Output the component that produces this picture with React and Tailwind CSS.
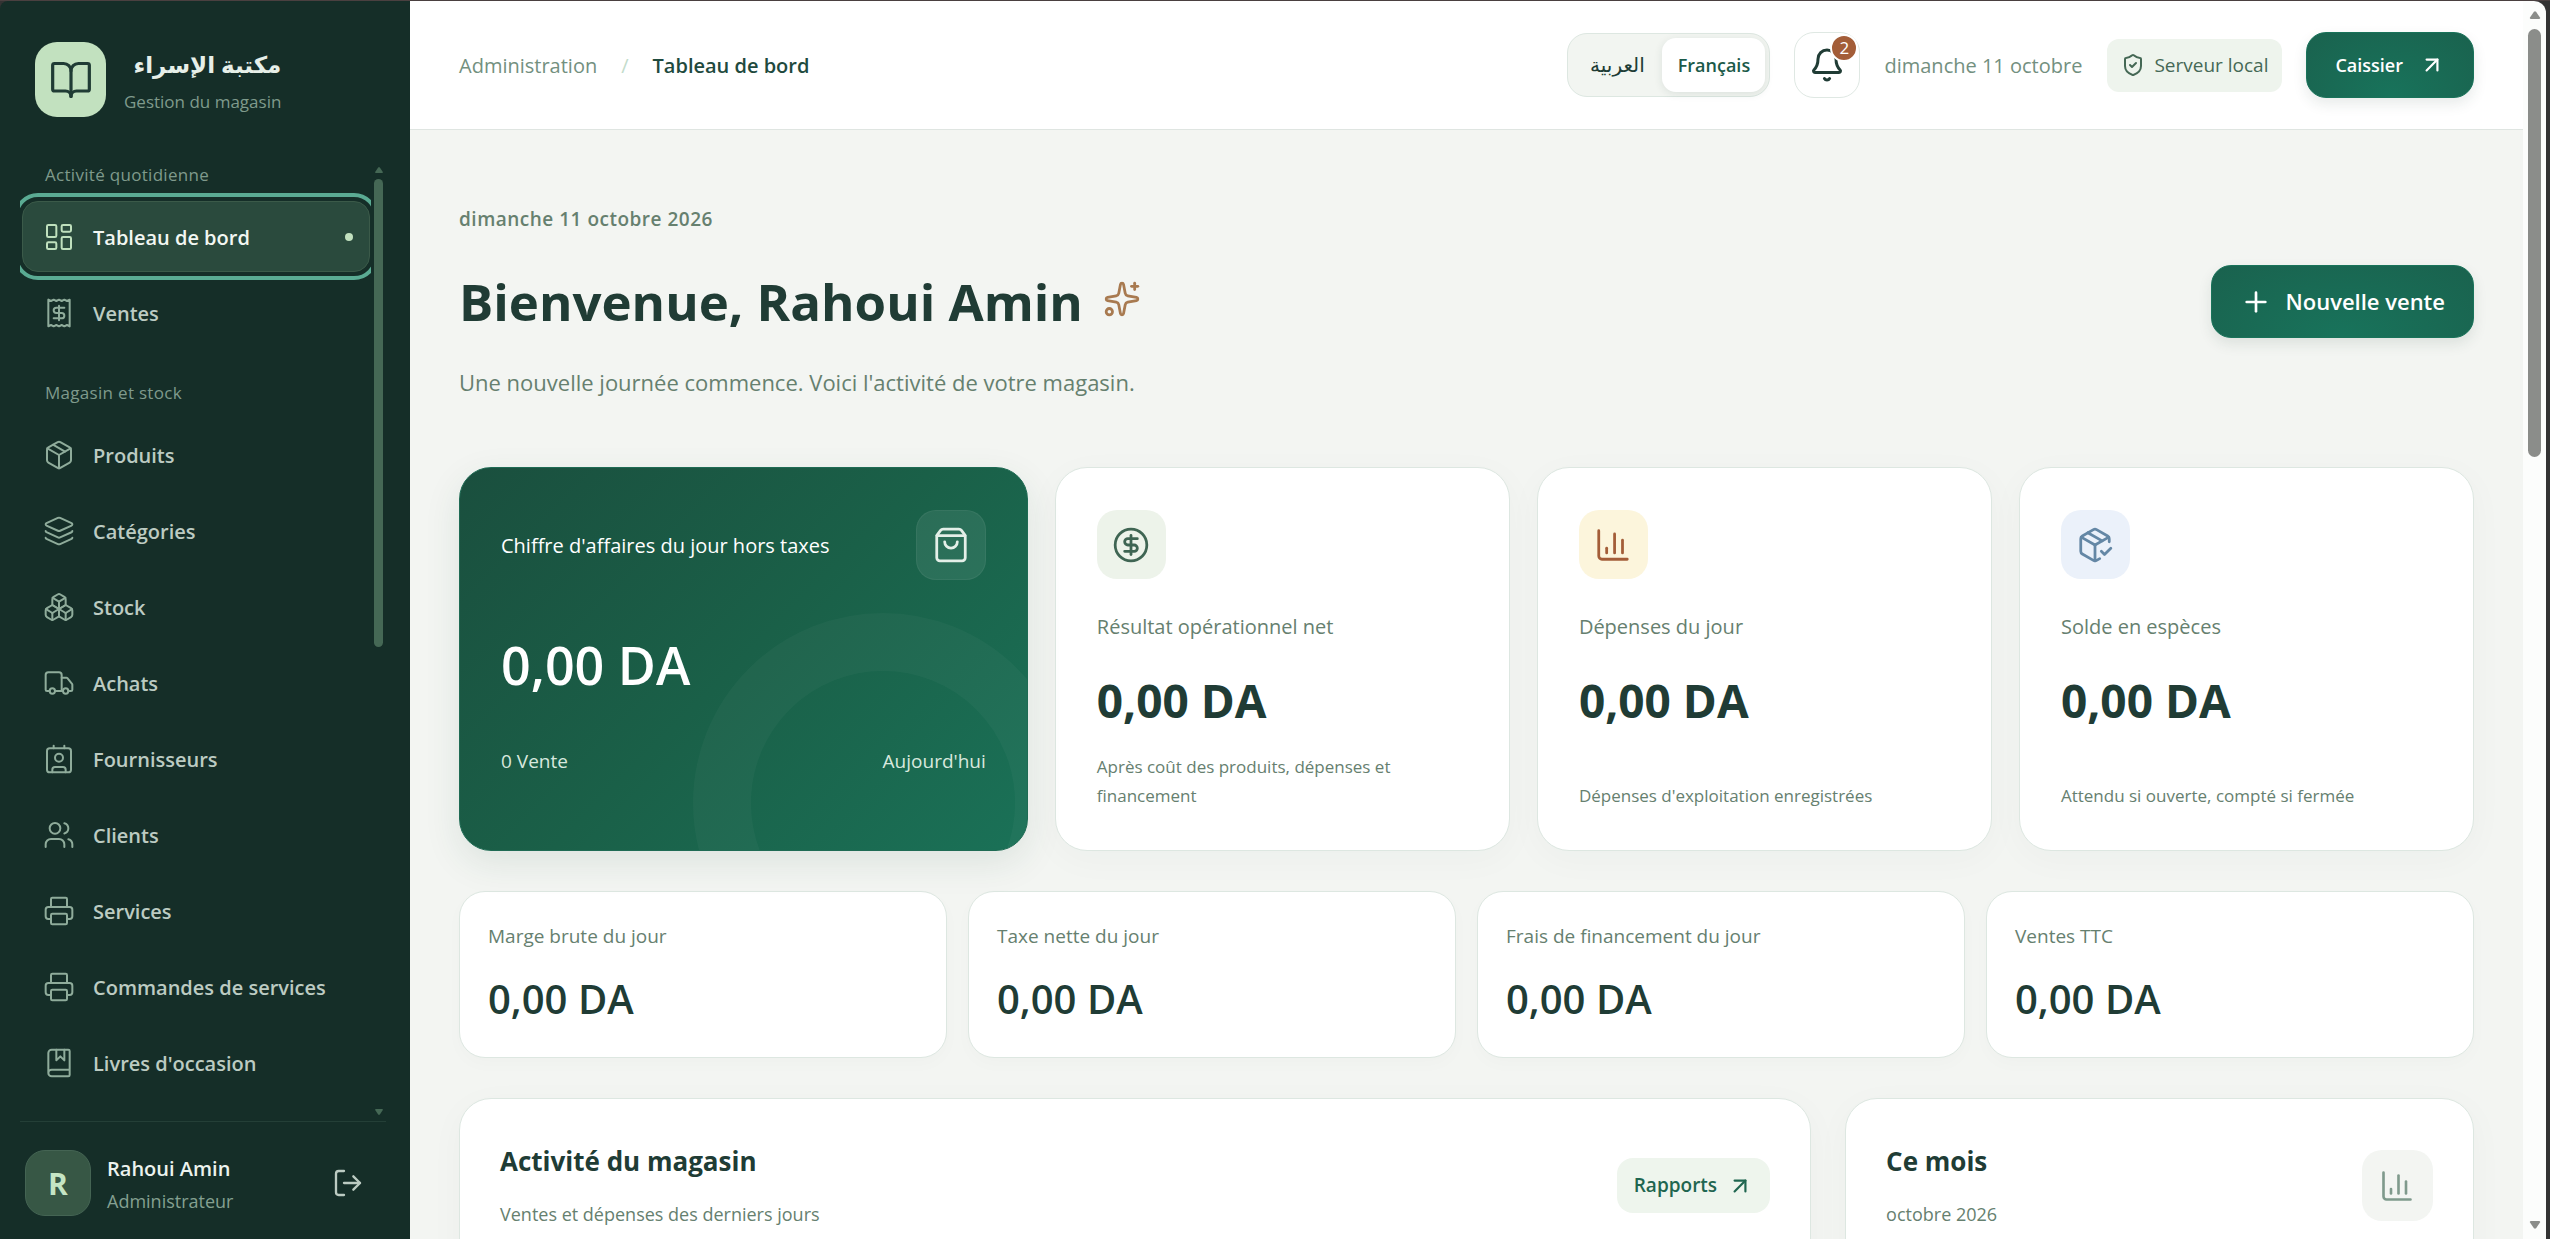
import React from "react";
import {
  ArrowUpRight,
  Bell,
  BookMarked,
  BookOpen,
  Boxes,
  ChartColumn,
  CircleDollarSign,
  Contact,
  Layers,
  LayoutDashboard,
  LogOut,
  Package,
  PackageCheck,
  Plus,
  Printer,
  Receipt,
  ShieldCheck,
  ShoppingBag,
  Sparkles,
  Truck,
  Users,
} from "lucide-react";

const sections = [
  {
    title: "Activité quotidienne",
    items: [
      { label: "Tableau de bord", icon: LayoutDashboard, active: true },
      { label: "Ventes", icon: Receipt },
    ],
  },
  {
    title: "Magasin et stock",
    items: [
      { label: "Produits", icon: Package },
      { label: "Catégories", icon: Layers },
      { label: "Stock", icon: Boxes },
      { label: "Achats", icon: Truck },
      { label: "Fournisseurs", icon: Contact },
      { label: "Clients", icon: Users },
      { label: "Services", icon: Printer },
      { label: "Commandes de services", icon: Printer },
      { label: "Livres d'occasion", icon: BookMarked },
    ],
  },
];

const metrics = [
  {
    label: "Résultat opérationnel net",
    note: "Après coût des produits, dépenses et financement",
    icon: CircleDollarSign,
    tone: "bg-[#edf3ea] text-[#3f6553]",
  },
  {
    label: "Dépenses du jour",
    note: "Dépenses d'exploitation enregistrées",
    icon: ChartColumn,
    tone: "bg-[#fcf5dc] text-[#a35d38]",
  },
  {
    label: "Solde en espèces",
    note: "Attendu si ouverte, compté si fermée",
    icon: PackageCheck,
    tone: "bg-[#ebf1fa] text-[#6487a5]",
  },
];

const totals = [
  "Marge brute du jour",
  "Taxe nette du jour",
  "Frais de financement du jour",
  "Ventes TTC",
];

function Triangle({ down, className }) {
  return (
    <svg viewBox="0 0 12 9" className={className} fill="currentColor" aria-hidden="true">
      <path d={down ? "M1 0h10l1 1-5 7.500H5L0 1z" : "M5 .5h2l5 7.500-1 1H1L0 8z"} />
    </svg>
  );
}

function NavItem({ label, icon: Icon, active }) {
  return (
    <li>
      <a
        href="#"
        aria-current={active ? "page" : undefined}
        className={
          active
            ? "flex h-[71px] items-center gap-[18px] rounded-2xl border border-[#3b5a49] bg-[#2a4a3d] pr-4 pl-5 text-[#f2f7f2] outline-4 outline-offset-4 outline-[#5aab93]"
            : "flex h-[71px] items-center gap-[18px] rounded-2xl border border-transparent pr-4 pl-5 text-[#bccbc2]"
        }
      >
        <Icon
          size={32}
          strokeWidth={1.5}
          className={active ? "shrink-0 text-[#bfe0bd]" : "shrink-0 text-[#8fac9b]"}
        />
        <span className="flex-1 pt-0.5 text-[20px] leading-7 font-semibold whitespace-nowrap">{label}</span>
        {active && <span className="size-2 rounded-full bg-[#c2e1bf]" />}
      </a>
    </li>
  );
}

function Sidebar() {
  return (
    <aside className="flex w-[410px] shrink-0 flex-col rounded-tl-lg bg-[#152e28] pr-6 pl-5">
      <div className="flex items-center gap-[18px] pt-[41px] pl-[15px]">
        <div className="flex h-[75px] w-[71px] items-center justify-center rounded-[22px] bg-[#c2e1bf] text-[#203c35]">
          <BookOpen size={44} strokeWidth={1.75} />
        </div>
        <div className="flex flex-col items-end gap-2">
          <span lang="ar" dir="rtl" className="text-[23px] leading-9 font-semibold text-[#e6efe8]">
            مكتبة الإسراء
          </span>
          <span className="text-[17px] leading-6 text-[#7f9a8c]">Gestion du magasin</span>
        </div>
      </div>

      <div className="mt-[46px] flex min-h-0 flex-1 gap-[3px] pr-[3px]">
        <nav className="min-w-0 flex-1 overflow-hidden pr-px pl-0.5">
          {sections.map((section) => (
            <div key={section.title} className="mb-[33px]">
              <h2 className="mb-3.5 pl-[23px] text-[17px] leading-6 tracking-[0.3px] text-[#7f9a8c]">
                {section.title}
              </h2>
              <ul className="flex flex-col gap-[5px]">
                {section.items.map((item) => (
                  <NavItem key={item.label} {...item} />
                ))}
              </ul>
            </div>
          ))}
        </nav>
        <div aria-hidden="true" className="flex w-[9px] flex-col items-center pt-1 pb-1.5 text-[#456855]">
          <Triangle className="h-1.5 w-2" />
          <div className="mt-1.5 h-[468px] w-full rounded-full bg-[#456855]" />
          <Triangle down className="mt-auto h-1.5 w-2" />
        </div>
      </div>

      <div className="flex items-center gap-4 border-t border-[#243f37] pt-7 pr-[22px] pb-[23px] pl-[5px]">
        <div className="flex size-[66px] items-center justify-center rounded-[20px] border border-[#446453] bg-[#375745] text-[30px] font-bold text-[#c5e5c4]">
          R
        </div>
        <div className="flex flex-1 flex-col gap-1 pt-1">
          <span className="text-[20px] leading-7 font-semibold text-[#ecf3ee]">Rahoui Amin</span>
          <span className="text-[18px] leading-7 text-[#84a091]">Administrateur</span>
        </div>
        <button type="button" aria-label="Se déconnecter" className="text-[#bccbc2]">
          <LogOut size={32} strokeWidth={1.75} />
        </button>
      </div>
    </aside>
  );
}

function TopBar() {
  return (
    <header className="flex h-[129px] shrink-0 items-center justify-between border-b border-[#dfe5e1] bg-white px-[49px]">
      <nav aria-label="Fil d'Ariane" className="flex items-center gap-6 pt-0.5 text-[20px]">
        <a href="#" className="text-[#73907f]">Administration</a>
        <span className="text-[#c3dccb]">/</span>
        <span className="font-semibold text-[#1f4a3e]">Tableau de bord</span>
      </nav>

      <div className="flex items-center">
        <div className="flex items-center rounded-[20px] border border-[#dde7e1] bg-[#f2f5f1] p-1 text-[18px]">
          <button type="button" lang="ar" className="h-[54px] w-[90px] text-[20px] text-[#203c35]">
            العربية
          </button>
          <button
            type="button"
            aria-pressed="true"
            className="h-[54px] w-[103px] rounded-[14px] bg-white font-semibold text-[#1b5a49] shadow-[0_2px_8px_rgba(32,60,53,0.1)]"
          >
            Français
          </button>
        </div>
        <button
          type="button"
          aria-label="Notifications"
          className="relative ml-6 flex size-[66px] items-center justify-center rounded-[20px] border border-[#dfe8e3] bg-white text-[#203c35]"
        >
          <Bell size={36} strokeWidth={2} />
          <span className="absolute top-px right-px flex size-[28px] items-center justify-center rounded-full border-2 border-white bg-[#a35d38] text-[17px] text-white">
            2
          </span>
        </button>
        <span className="ml-6 pt-0.5 text-[20px] text-[#73907f]">dimanche 11 octobre</span>
        <span className="ml-[25px] flex h-[53px] items-center gap-[9px] rounded-xl bg-[#eef4ed] px-3.5 text-[19px] text-[#456855]">
          <ShieldCheck size={24} strokeWidth={2} />
          Serveur local
        </span>
        <button
          type="button"
          className="ml-6 flex h-[66px] items-center gap-4 rounded-[20px] border border-[#19735a] bg-radial-[at_50%_100%] from-[#18735b] to-[#1a624e] px-7 text-[18px] font-semibold text-white shadow-[0_6px_14px_rgba(32,60,53,0.1)]"
        >
          Caissier
          <ArrowUpRight size={26} strokeWidth={2} />
        </button>
      </div>
    </header>
  );
}

function RevenueCard() {
  return (
    <article className="relative overflow-hidden rounded-[32px] border border-[#1f6b54] bg-linear-135 from-[#1a4f3e] via-[#1a6048] to-[#1a7157] px-[41px] pt-[42px] text-white shadow-[0_12px_36px_rgba(32,80,60,0.1)]">
      <div className="absolute -right-[46px] -bottom-[143px] size-[380px] rounded-full border-[58px] border-white/3" />
      <div className="relative flex items-center justify-between">
        <h2 className="pt-0.5 text-[20px]">Chiffre d'affaires du jour hors taxes</h2>
        <div className="flex size-[70px] items-center justify-center rounded-[20px] border border-white/5 bg-white/8 text-[#e4efe8]">
          <ShoppingBag size={38} strokeWidth={1.75} />
        </div>
      </div>
      <p className="relative mt-[49px] text-[52px] leading-[72px] font-semibold">0,00 DA</p>
      <div className="relative mt-[46px] flex justify-between text-[19px] leading-7 text-[#d8e8de]">
        <span>0 Vente</span>
        <span>Aujourd'hui</span>
      </div>
    </article>
  );
}

function MetricCard({ label, note, icon: Icon, tone }) {
  return (
    <article className="flex flex-col rounded-[32px] border border-[#dde7e1] bg-white px-[41px] pt-[42px] pb-[40px] shadow-[0_8px_36px_rgba(32,60,53,0.03)]">
      <div className={`flex size-[69px] items-center justify-center rounded-[20px] ${tone}`}>
        <Icon size={38} strokeWidth={1.75} />
      </div>
      <h2 className="mt-[34px] text-[20px] leading-7 text-[#66806f]">{label}</h2>
      <p className="mt-[27px] text-[46px] leading-[64px] font-bold text-[#203c35]">0,00 DA</p>
      <p className="mt-auto text-[17px] leading-[29px] text-[#66806f]">{note}</p>
    </article>
  );
}

export default function App() {
  return (
    <div className="flex h-screen flex-col overflow-hidden bg-[#4a4040] pt-px font-['Open_Sans','DejaVu_Sans',sans-serif]">
      <div className="flex min-h-0 flex-1 bg-[#333]">
        <Sidebar />
        <div className="flex min-w-0 flex-1 flex-col overflow-hidden bg-[#f3f5f2]">
          <TopBar />
          <main className="flex flex-col px-[49px]">
            <p className="mt-[75px] text-[19px] leading-7 font-semibold tracking-[0.5px] text-[#66806f]">
              dimanche 11 octobre 2026
            </p>
            <div className="mt-[32px] flex items-center justify-between">
              <h1 className="flex items-center gap-5 text-[51px] leading-[73px] font-bold text-[#203c35]">
                Bienvenue, Rahoui Amin
                <Sparkles size={38} strokeWidth={1.75} className="mb-1.5 text-[#a87a50]" />
              </h1>
              <button
                type="button"
                className="flex h-[73px] items-center gap-3.5 rounded-[20px] border border-[#19735a] bg-radial-[at_50%_100%] from-[#18735b] to-[#1a624e] px-7 text-[22px] font-semibold text-white shadow-[0_6px_14px_rgba(32,60,53,0.1)]"
              >
                <Plus size={32} strokeWidth={2} />
                Nouvelle vente
              </button>
            </div>
            <p className="mt-7 text-[22px] leading-8 text-[#66806f]">
              Une nouvelle journée commence. Voici l'activité de votre magasin.
            </p>

            <section className="mt-[69px] grid h-[384px] grid-cols-[1.25fr_1fr_1fr_1fr] gap-[27px]">
              <RevenueCard />
              {metrics.map((metric) => (
                <MetricCard key={metric.label} {...metric} />
              ))}
            </section>

            <section className="mt-10 grid grid-cols-4 gap-[21px]">
              {totals.map((label) => (
                <article
                  key={label}
                  className="rounded-[26px] border border-[#dde7e1] bg-white px-7 pt-[30px] pb-[30px] shadow-[0_6px_18px_rgba(32,60,53,0.02)]"
                >
                  <h2 className="text-[19px] leading-7 text-[#66806f]">{label}</h2>
                  <p className="mt-[21px] text-[40px] leading-[56px] font-semibold text-[#203c35]">0,00 DA</p>
                </article>
              ))}
            </section>

            <section className="mt-10 grid grid-cols-[2.15fr_1fr] gap-[34px]">
              <article className="flex h-72 items-start justify-between rounded-[32px] border border-[#dde7e1] bg-white px-10 pt-[43px] shadow-[0_8px_36px_rgba(32,60,53,0.03)]">
                <div>
                  <h2 className="text-[26px] leading-[38px] font-bold text-[#203c35]">Activité du magasin</h2>
                  <p className="mt-5 text-[18px] leading-7 text-[#66806f]">Ventes et dépenses des derniers jours</p>
                </div>
                <a
                  href="#"
                  className="mt-4 flex h-[55px] items-center gap-2.5 rounded-2xl bg-[#eef5ed] px-[17px] text-[19px] font-semibold text-[#1f6650]"
                >
                  Rapports
                  <ArrowUpRight size={26} strokeWidth={2} />
                </a>
              </article>
              <article className="flex h-72 items-start justify-between rounded-[32px] border border-[#dde7e1] bg-white px-10 pt-[43px] shadow-[0_8px_36px_rgba(32,60,53,0.03)]">
                <div>
                  <h2 className="text-[26px] leading-[38px] font-bold text-[#203c35]">Ce mois</h2>
                  <p className="mt-5 text-[18px] leading-7 text-[#66806f]">octobre 2026</p>
                </div>
                <div className="mt-2 flex size-[71px] items-center justify-center rounded-[20px] bg-[#f3f5f2] text-[#7f9a8c]">
                  <ChartColumn size={36} strokeWidth={1.75} />
                </div>
              </article>
            </section>
          </main>
        </div>
        <div
          aria-hidden="true"
          className="mr-1 flex w-[23px] shrink-0 flex-col items-center rounded-tr-xl bg-[#fcfdfc] py-2.5 text-[#8b8d8a]"
        >
          <Triangle className="h-2 w-3" />
          <div className="mt-2.5 h-[428px] w-[13px] rounded-full bg-[#8b8d8a]" />
          <Triangle down className="mt-auto h-2 w-3" />
        </div>
      </div>
    </div>
  );
}
